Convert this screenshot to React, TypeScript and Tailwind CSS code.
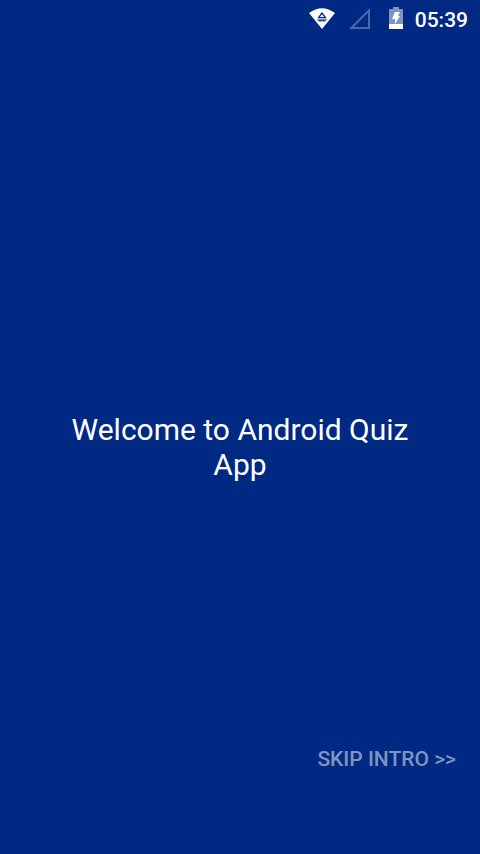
export default function App() {
  return (
    <div className="flex min-h-screen flex-col bg-[#002984] font-[Roboto,sans-serif] text-white">
      <header className="flex h-10 items-center justify-end pr-3">
        <svg className="mr-3" width="28" height="24" viewBox="0 0 28 24" aria-hidden="true">
          <path d="M1 5Q14-4.5 27 5L14 21Z" fill="#fff" />
          <path d="M14 5L17.4 9.6H10.6Z" fill="none" stroke="#002984" strokeWidth="1.3" />
          <path d="M9.5 11.3h9v1l-1.5 1.2h-6L9.5 12.300z" fill="#33549d" />
        </svg>
        <svg className="mr-4" width="24" height="24" viewBox="0 0 24 24" aria-hidden="true">
          <path d="M3.4 20L21 2.4V20Z" fill="none" stroke="#4d69a9" strokeWidth="2" />
        </svg>
        <svg className="mr-[11px]" width="16" height="26" viewBox="0 0 16 26" aria-hidden="true">
          <path d="M1 2h4V0h6v2h4v20H1z" fill="#8094c2" />
          <path d="M1 17h14v5H1zM7 5h5l-2 4h2l-5 8v-5H4z" fill="#fff" />
        </svg>
        <time className="text-[21px] leading-6 font-medium">05:39</time>
      </header>
      <main className="flex grow flex-col items-center justify-center px-12">
        <h1 className="text-center text-[30px] leading-[35px] font-normal">Welcome to Android Quiz App</h1>
      </main>
      <footer className="-mt-28 flex h-28 items-start justify-end px-6">
        <button type="button" className="text-[21px] leading-[34px] font-medium text-[#8094c2]">SKIP INTRO &gt;&gt;</button>
      </footer>
    </div>
  );
}
